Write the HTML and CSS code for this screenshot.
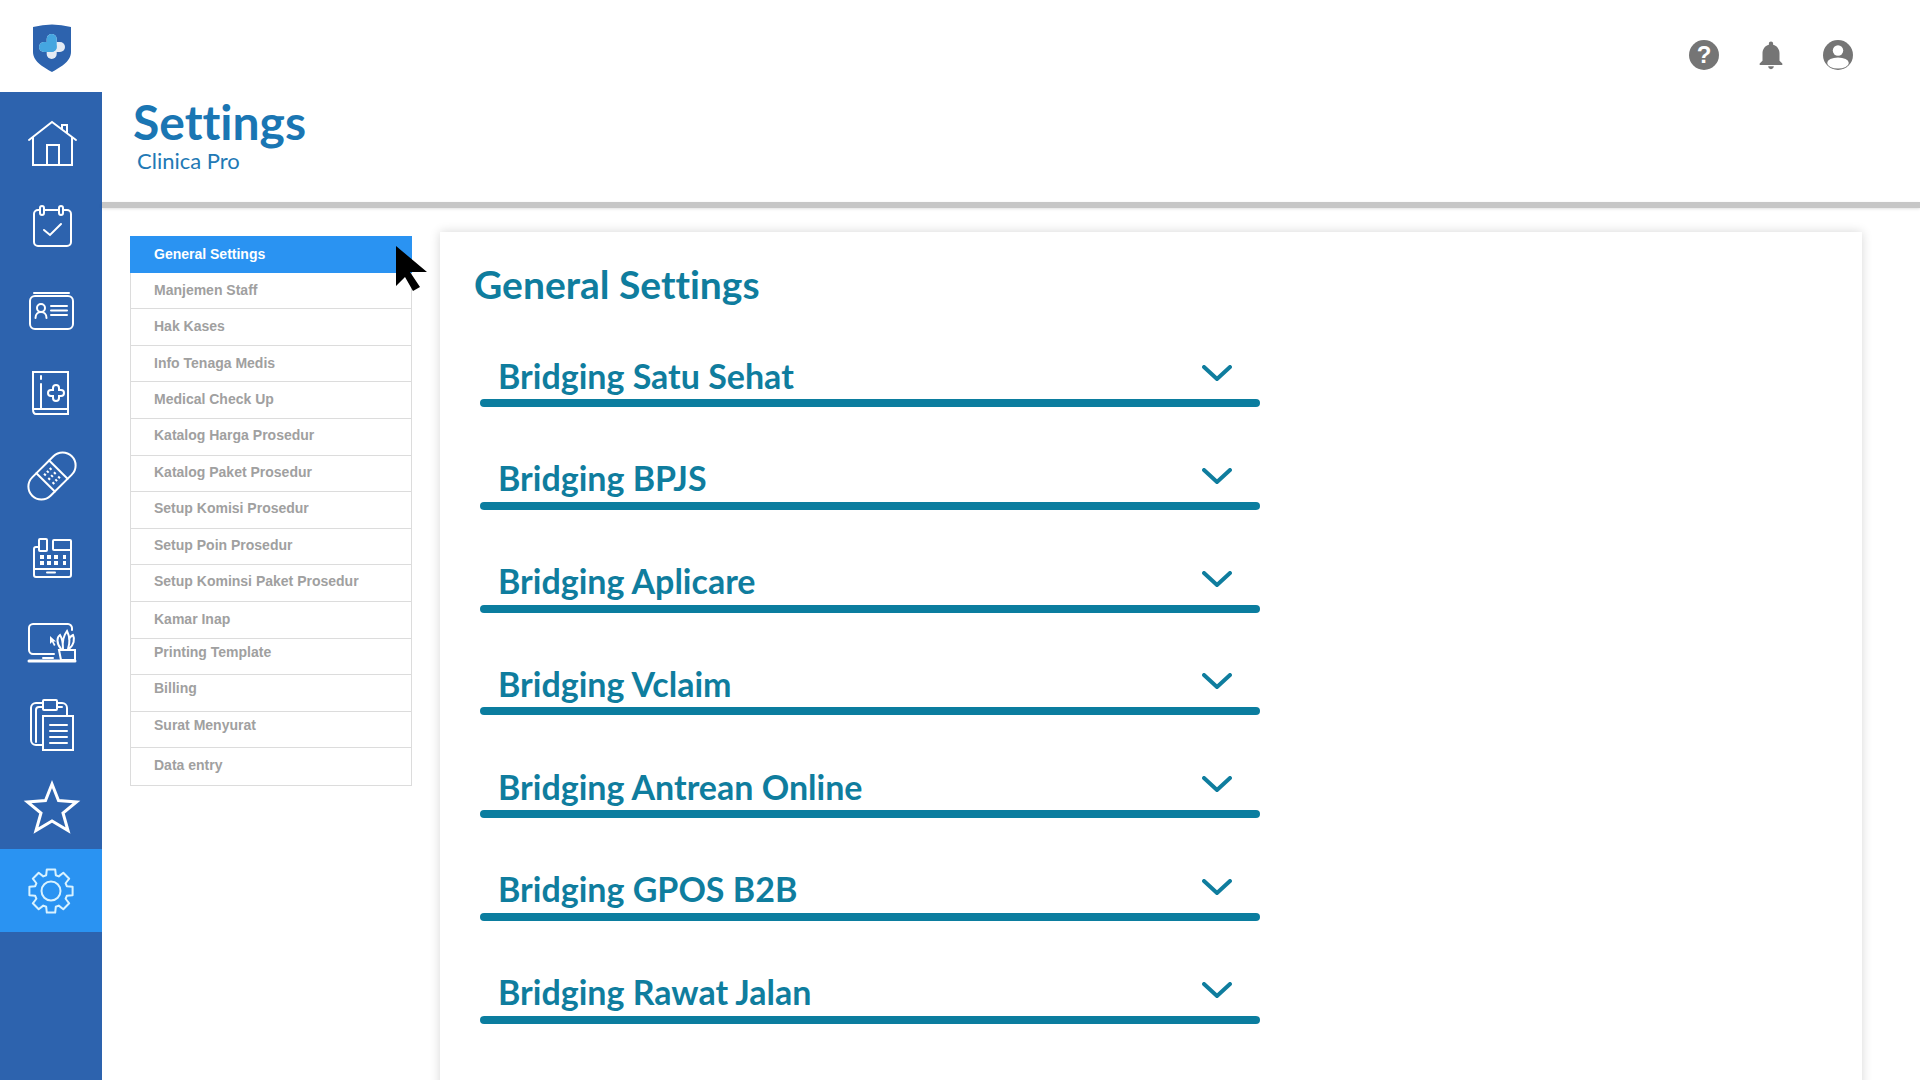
FILE: index.html
```html
<!DOCTYPE html>
<html lang="en">
<head>
    <meta charset="UTF-8">
    <title>Settings - Clinica Pro</title>
    <link rel="stylesheet" href="styles.css">
</head>
<body>
    <header class="topbar">
        <div class="logo">
            <svg width="38" height="48" viewBox="0 -1 38 48">
                <path d="M0 2Q19-3 38 2V27C38 37 26 43 19 47 12 43 0 37 0 27Z" fill="#2d63ae"/>
                <rect x="13.7" y="9" width="10" height="25" rx="5" fill="#e4ebf4"/>
                <rect x="6" y="17" width="26" height="10" rx="5" fill="#e4ebf4"/>
                <rect x="13.7" y="9" width="10" height="18" rx="5" fill="#45a6e0"/>
                <rect x="6" y="17" width="17.7" height="10" rx="5" fill="#45a6e0"/>
            </svg>
        </div>
        <div class="top-icons">
            <svg width="32" height="32" viewBox="0 0 32 32">
                <circle cx="16" cy="16" r="15" fill="#757575"/>
                <text x="16" y="24" class="help-mark">?</text>
            </svg>
            <svg width="34" height="34" viewBox="0 0 24 24">
                <path fill="#757575" d="M12 22c1.1 0 2-.9 2-2h-4c0 1.1.89 2 2 2zm6-6v-5c0-3.07-1.64-5.64-4.5-6.32V4c0-.83-.67-1.5-1.5-1.5s-1.5.67-1.5 1.5v.68C7.63 5.36 6 7.92 6 11v5l-2 2v1h16v-1l-2-2z"/>
            </svg>
            <svg width="32" height="32" viewBox="0 0 32 32">
                <circle cx="16" cy="16" r="15" fill="#757575"/>
                <circle cx="16" cy="11.5" r="5.2" fill="#fff"/>
                <ellipse cx="16" cy="24" rx="10.8" ry="5.6" fill="#fff"/>
            </svg>
        </div>
    </header>

    <div class="main">
        <nav class="sidebar">
            <a class="side-item">
                <svg class="side-icon" viewBox="0 0 60 60">
                    <path d="M8 26 31 8 55 26M12 23V51H51V23M26 51V31H38V51M41 15V11H46V19"/>
                </svg>
            </a>
            <a class="side-item">
                <svg class="side-icon" viewBox="0 1 60 60">
                    <rect x="13" y="14" width="37" height="36" rx="4"/>
                    <rect x="19" y="10" width="4" height="9" rx="2" class="on-side"/>
                    <rect x="38" y="10" width="4" height="9" rx="2" class="on-side"/>
                    <path d="M23 34 29 39 40 28"/>
                </svg>
            </a>
            <a class="side-item">
                <svg class="side-icon" viewBox="0 -1 60 60">
                    <rect x="9" y="15" width="43" height="33" rx="5"/>
                    <path d="M13 12H48"/>
                    <circle cx="20" cy="27" r="4"/>
                    <path d="M14.500 37C14.500 29 25.500 29 25.500 37M30 25H46M30 29.500H46M30 34H46"/>
                </svg>
            </a>
            <a class="side-item">
                <svg class="side-icon" viewBox="0 0 60 60">
                    <path d="M12 46V9H47V51H15C13 51 12 49 12 46ZM12 46H47M20 46V21M20 13V16"/>
                    <path d="M32 25a3 3 0 0 1 6 0v2h2a3 3 0 0 1 0 6h-2v2a3 3 0 0 1-6 0v-2h-2a3 3 0 0 1 0-6h2Z"/>
                </svg>
            </a>
            <a class="side-item">
                <svg class="side-icon" viewBox="0 0 60 60">
                    <g transform="rotate(-45 31 30)">
                        <rect x="3" y="17" width="56" height="26" rx="13"/>
                        <path d="M22 17V43M40 17V43"/>
                        <path class="dots" d="M26 24H36M26 30H36M26 36H36"/>
                    </g>
                </svg>
            </a>
            <a class="side-item">
                <svg class="side-icon" viewBox="0 2 60 60">
                    <path d="M18 20H15C14 20 13 21 13 22V48C13 49 14 50 15 50H48C49 50 50 49 50 48V23"/>
                    <rect x="18" y="12" width="8" height="12" rx="1"/>
                    <rect x="32" y="13" width="18" height="10" rx="1"/>
                    <path d="M13 42H50M26 45.500H34"/>
                    <path class="keys" d="M19 30H23M26 30H30M33 30H37M42 30H45M19 36H23M26 36H30M33 36H37M42 36H45"/>
                </svg>
            </a>
            <a class="side-item">
                <svg class="side-icon" viewBox="0 -1 60 60">
                    <path d="M33 41H12C9.800 41 8 39 8 37V15C8 13 9.800 11 12 11H47C49 11 51 13 51 15V17"/>
                    <path d="M8 48H54" class="thick"/>
                    <path d="M22 45H32"/>
                    <path d="M38 37H54V47H40Z"/>
                    <path d="M40 36C35 30 36 24 39 22 41 25 42 28 42 36M42 36C41 28 43 22 46 18 49 24 49 30 47 36M48 36C53 32 54 26 52 22 50 23 49 24 48 26"/>
                    <path class="solid" d="M29 23V31L31 29 33 33 34.500 32 32.500 28.500H35Z"/>
                </svg>
            </a>
            <a class="side-item">
                <svg class="side-icon" viewBox="0 0 60 60">
                    <rect x="10" y="8" width="36" height="42" rx="5"/>
                    <path d="M15 47V15C15 13 16 12 18 12H41"/>
                    <rect x="22" y="5" width="14" height="10" rx="1" class="on-side"/>
                    <rect x="22" y="21" width="30" height="34" class="on-side"/>
                    <path d="M29 30H46M29 36H46M29 42H46M29 48H46"/>
                </svg>
            </a>
            <a class="side-item">
                <svg class="side-icon side-star" viewBox="0 0 60 60">
                    <path d="M31 6 37.500 22.500 55.500 24 42 35 47 52.500 31 43 15 52.500 20 35 6.500 24 24.500 22.500Z"/>
                </svg>
            </a>
            <a class="side-item side-active">
                <svg class="side-icon gear" viewBox="-30 -30 60 60">
                    <circle r="9.500"/>
                    <path d="M-4.200-21.600 4.200-21.600 4.800-15.800 7.750-14.600 12.300-18.200 18.200-12.300 14.600-7.750 15.800-4.800 21.600-4.200 21.600 4.200 15.800 4.800 14.600 7.750 18.200 12.300 12.300 18.200 7.750 14.600 4.800 15.800 4.200 21.600-4.200 21.600-4.800 15.800-7.750 14.600-12.300 18.200-18.200 12.300-14.600 7.750-15.800 4.800-21.600 4.200-21.600-4.200-15.800-4.800-14.600-7.750-18.200-12.300-12.300-18.200-7.750-14.600-4.800-15.800Z"/>
                </svg>
            </a>
        </nav>

        <div class="page">
            <div class="page-header">
                <h1>Settings</h1>
                <p class="subtitle">Clinica Pro</p>
            </div>
            <div class="page-rule"></div>

            <div class="page-body">
                <ul class="menu">
                    <li class="active">General Settings</li>
                    <li>Manjemen Staff</li>
                    <li>Hak Kases</li>
                    <li>Info Tenaga Medis</li>
                    <li>Medical Check Up</li>
                    <li class="up">Katalog Harga Prosedur</li>
                    <li class="up">Katalog Paket Prosedur</li>
                    <li class="up">Setup Komisi Prosedur</li>
                    <li class="up">Setup Poin Prosedur</li>
                    <li class="up">Setup Kominsi Paket Prosedur</li>
                    <li class="low">Kamar Inap</li>
                    <li class="high">Printing Template</li>
                    <li class="high">Billing</li>
                    <li class="high">Surat Menyurat</li>
                    <li class="low">Data entry</li>
                </ul>

                <section class="panel">
                    <h2>General Settings</h2>
                    <div class="accordion">
                        <div class="acc-head"><span>Bridging Satu Sehat</span><svg class="chevron" viewBox="0 0 30 16"><path d="M2 2 15 14 28 2"/></svg></div>
                        <div class="acc-bar"></div>
                    </div>
                    <div class="accordion">
                        <div class="acc-head"><span>Bridging BPJS</span><svg class="chevron" viewBox="0 0 30 16"><path d="M2 2 15 14 28 2"/></svg></div>
                        <div class="acc-bar"></div>
                    </div>
                    <div class="accordion">
                        <div class="acc-head"><span>Bridging Aplicare</span><svg class="chevron" viewBox="0 0 30 16"><path d="M2 2 15 14 28 2"/></svg></div>
                        <div class="acc-bar"></div>
                    </div>
                    <div class="accordion">
                        <div class="acc-head"><span>Bridging Vclaim</span><svg class="chevron" viewBox="0 0 30 16"><path d="M2 2 15 14 28 2"/></svg></div>
                        <div class="acc-bar"></div>
                    </div>
                    <div class="accordion">
                        <div class="acc-head"><span>Bridging Antrean Online</span><svg class="chevron" viewBox="0 0 30 16"><path d="M2 2 15 14 28 2"/></svg></div>
                        <div class="acc-bar"></div>
                    </div>
                    <div class="accordion">
                        <div class="acc-head"><span>Bridging GPOS B2B</span><svg class="chevron" viewBox="0 0 30 16"><path d="M2 2 15 14 28 2"/></svg></div>
                        <div class="acc-bar"></div>
                    </div>
                    <div class="accordion">
                        <div class="acc-head"><span>Bridging Rawat Jalan</span><svg class="chevron" viewBox="0 0 30 16"><path d="M2 2 15 14 28 2"/></svg></div>
                        <div class="acc-bar"></div>
                    </div>
                </section>
            </div>
        </div>
    </div>

    <svg class="cursor" width="32" height="46" viewBox="0 0 32 46">
        <path d="M0 0 31 26H14L24 41 17 45 9 31 0 40Z" fill="#000"/>
    </svg>
</body>
</html>
```

FILE: styles.css
```css
html, body {
    height: 100%;
}

body {
    position: relative;
    display: flex;
    flex-direction: column;
    margin: 0;
    height: 1080px;
    overflow: hidden;
    background-color: #ffffff;
    font-family: "Liberation Sans", Arial, sans-serif;
}

.topbar {
    display: flex;
    flex-shrink: 0;
    justify-content: space-between;
    height: 92px;
}

.logo {
    display: flex;
    justify-content: center;
    width: 102px;
    padding-top: 24px;
}

.logo svg {
    margin-left: 2px;
}

.top-icons {
    display: flex;
    align-items: center;
    gap: 34px;
    height: 32px;
    margin-top: 39px;
    padding-right: 66px;
}

.help-mark {
    font-family: "Liberation Sans", Arial, sans-serif;
    font-size: 24px;
    font-weight: bold;
    fill: #ffffff;
    text-anchor: middle;
}

.main {
    display: flex;
    flex: 1;
    min-height: 0;
}

/* left rail */
.sidebar {
    flex-shrink: 0;
    width: 102px;
    padding-top: 10px;
    background-color: #2d63ae;
}

.side-item {
    display: flex;
    justify-content: center;
    align-items: center;
    height: 83px;
}

.side-active {
    background-color: #2a93f2;
}

.side-icon {
    width: 60px;
    height: 60px;
    fill: none;
    stroke: #ffffff;
    stroke-width: 2;
    stroke-linecap: round;
}

.on-side {
    fill: #2d63ae;
}

.thick {
    stroke-width: 3;
}

.solid {
    fill: #ffffff;
    stroke: none;
}

.dots {
    stroke-width: 2.5;
    stroke-dasharray: 2 2;
    stroke-linecap: butt;
}

.keys {
    stroke-width: 4;
    stroke-linecap: butt;
}

.side-star {
    stroke-width: 3;
}

.gear {
    stroke: #d8f2ff;
    stroke-linejoin: round;
}

/* page */
.page {
    display: flex;
    flex: 1;
    flex-direction: column;
    min-width: 0;
}

.page-header {
    flex-shrink: 0;
    box-sizing: border-box;
    height: 110px;
    padding-left: 31px;
}

h1 {
    margin: 0;
    font-family: Lato, sans-serif;
    font-size: 48px;
    font-weight: bold;
    font-variant-ligatures: none;
    line-height: 60px;
    color: #1a76b3;
}

.subtitle {
    margin: -5px 0 0 4px;
    font-family: Lato, sans-serif;
    font-size: 22px;
    line-height: 28px;
    color: #2279b5;
}

.page-rule {
    flex-shrink: 0;
    height: 6px;
    background-color: #c6c6c6;
    box-shadow: 0 1px 3px rgba(0, 0, 0, 0.12);
}

.page-body {
    display: flex;
    flex: 1;
    align-items: flex-start;
    gap: 28px;
    min-height: 0;
    padding: 24px 0 0 28px;
}

/* settings menu */
.menu {
    flex-shrink: 0;
    box-sizing: border-box;
    width: 282px;
    margin: 4px 0 0;
    padding: 0;
    list-style: none;
    border: 1px solid #dcdcdc;
    border-top: none;
    font-size: 14px;
    font-weight: bold;
    color: #a0a0a0;
}

.menu li {
    box-sizing: border-box;
    height: 36.6px;
    padding-left: 23px;
    border-bottom: 1px solid #dcdcdc;
    line-height: 35px;
}

.menu li:last-child {
    border-bottom: none;
}

.menu li.active {
    margin: 0 -1px;
    padding-left: 24px;
    border-bottom: none;
    background-color: #2a93f2;
    line-height: 37px;
    color: #ffffff;
}

.menu li.up {
    line-height: 32px;
}

.menu li.low {
    line-height: 35px;
}

.menu li.high {
    line-height: 27px;
}

/* main panel */
.panel {
    flex-shrink: 0;
    box-sizing: border-box;
    width: 1422px;
    height: 900px;
    padding: 29px 0 0 34px;
    background-color: #ffffff;
    box-shadow: 0 0 10px rgba(0, 0, 0, 0.16);
}

h2 {
    margin: 0 0 11px;
    font-family: Lato, sans-serif;
    font-size: 39px;
    font-weight: bold;
    font-variant-ligatures: none;
    line-height: 46px;
    color: #0f7d9e;
}

.accordion {
    box-sizing: border-box;
    width: 780px;
    height: 102.8px;
    margin: 0 0 0 6px;
    padding-top: 33px;
}

.acc-head {
    display: flex;
    justify-content: space-between;
    align-items: center;
    height: 48px;
    padding: 0 28px 0 18px;
    font-family: Lato, sans-serif;
    font-size: 34px;
    font-weight: bold;
    color: #0f7d9e;
}

.chevron {
    width: 30px;
    height: 16px;
    margin-bottom: 4px;
    fill: none;
    stroke: #0f7d9e;
    stroke-width: 4;
    stroke-linecap: round;
}

.acc-bar {
    height: 8px;
    border-radius: 4px;
    background-color: #0b7d9f;
}

/* mouse pointer from the capture */
.cursor {
    position: absolute;
    top: 246px;
    left: 396px;
}
```
